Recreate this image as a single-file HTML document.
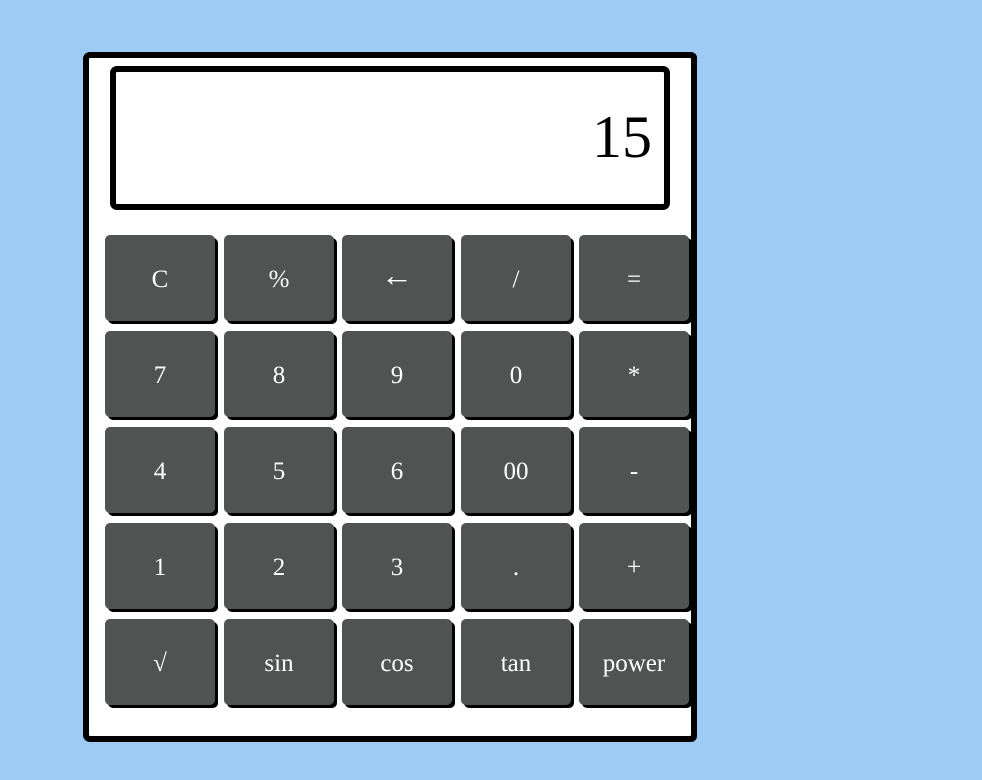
<!DOCTYPE html>
<html><head><style>
body{margin:0;background:#9ecbf3;width:982px;height:780px;position:relative;overflow:hidden;font-family:"Liberation Serif",serif;}
.calc{position:absolute;left:83px;top:52px;width:602px;height:678px;border:6px solid #000;border-radius:7px;background:#fff;overflow:hidden;}
.disp{position:absolute;left:21px;top:8px;width:548px;height:132px;border:6px solid #000;border-radius:7px;background:#fff;}
.disp span{position:absolute;right:12px;top:35px;font-size:60px;line-height:1;color:#000;}
.b{position:absolute;width:110px;height:86px;background:#4f5351;border-radius:5px;box-shadow:3px 3px 0 #000;color:#fff;font-size:25px;display:flex;align-items:center;justify-content:center;padding-top:3px;box-sizing:border-box;}
</style></head><body>
<div class="calc">
<div class="disp"><span>15</span></div>
</div>
<div style="position:absolute;left:0;top:0">
<div class="b" style="left:105px;top:235px">C</div>
<div class="b" style="left:224px;top:235px">%</div>
<div class="b" style="left:342px;top:235px;font-size:32px;padding:0 0 6px 0">←</div>
<div class="b" style="left:461px;top:235px">/</div>
<div class="b" style="left:579px;top:235px">=</div>
<div class="b" style="left:105px;top:331px">7</div>
<div class="b" style="left:224px;top:331px">8</div>
<div class="b" style="left:342px;top:331px">9</div>
<div class="b" style="left:461px;top:331px">0</div>
<div class="b" style="left:579px;top:331px">*</div>
<div class="b" style="left:105px;top:427px">4</div>
<div class="b" style="left:224px;top:427px">5</div>
<div class="b" style="left:342px;top:427px">6</div>
<div class="b" style="left:461px;top:427px">00</div>
<div class="b" style="left:579px;top:427px">-</div>
<div class="b" style="left:105px;top:523px">1</div>
<div class="b" style="left:224px;top:523px">2</div>
<div class="b" style="left:342px;top:523px">3</div>
<div class="b" style="left:461px;top:523px">.</div>
<div class="b" style="left:579px;top:523px">+</div>
<div class="b" style="left:105px;top:619px">√</div>
<div class="b" style="left:224px;top:619px">sin</div>
<div class="b" style="left:342px;top:619px">cos</div>
<div class="b" style="left:461px;top:619px">tan</div>
<div class="b" style="left:579px;top:619px">power</div>
</div>
<div style="position:absolute;left:691px;top:52px;width:6px;height:690px;background:#000;border-radius:0 7px 7px 0"></div>
</body></html>
